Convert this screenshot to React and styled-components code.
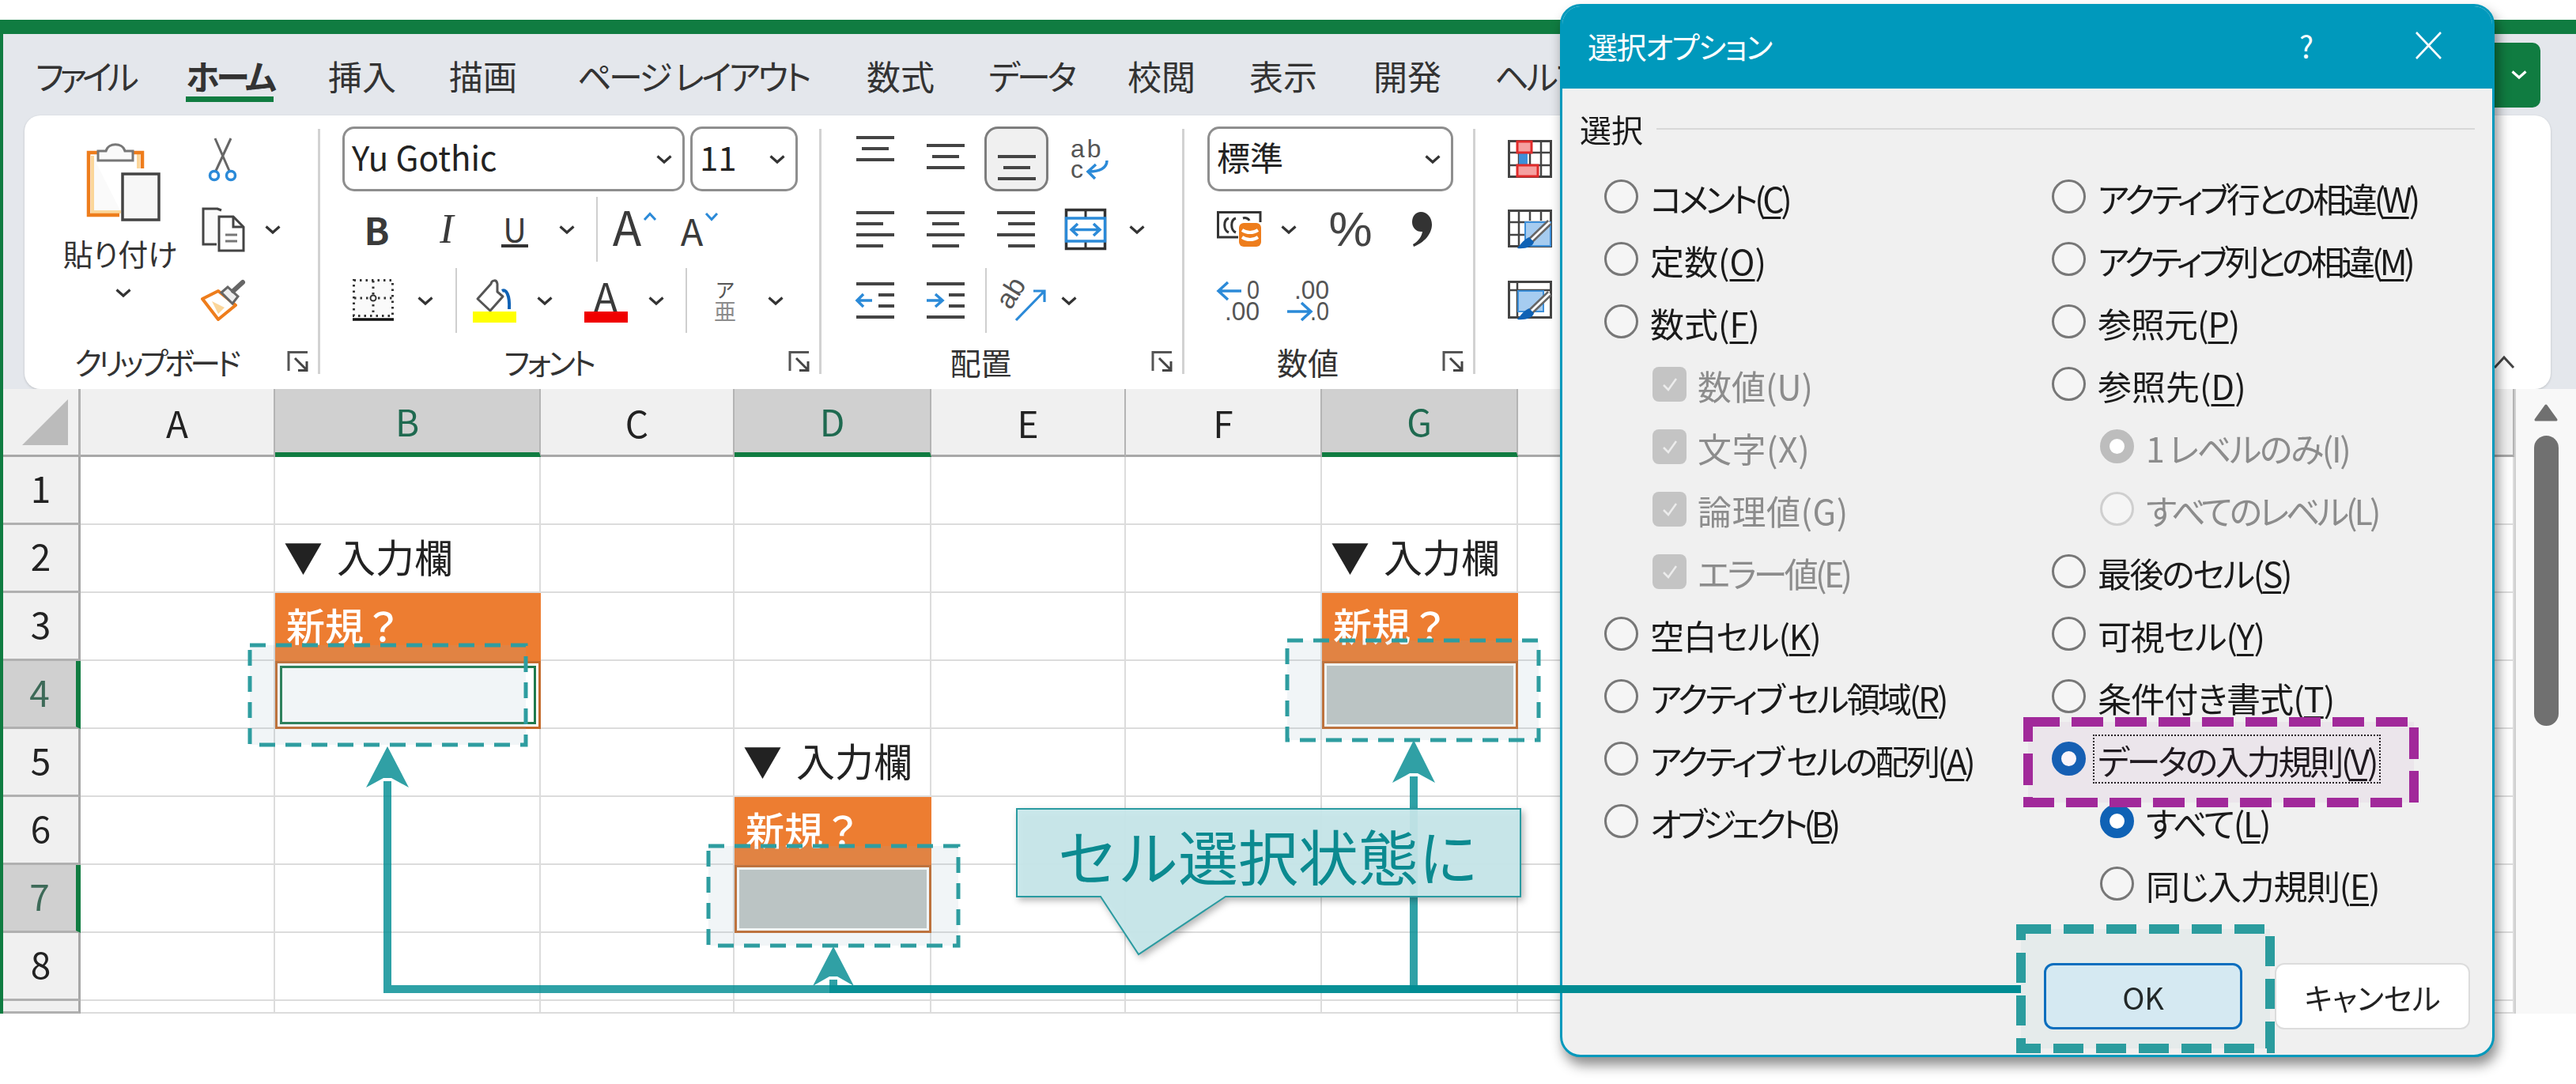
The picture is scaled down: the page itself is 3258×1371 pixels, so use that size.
import React from 'react';
import styled, { createGlobalStyle, css } from 'styled-components';

const JP = `"Noto Sans CJK JP", "Noto Sans", sans-serif`;
const BLUE = '#2b8ad8';
const INK = '#444';

const GlobalStyle = createGlobalStyle`
  html, body {
    margin: 0;
    background: #fff;
    font-family: ${JP};
    font-feature-settings: "palt";
  }
  * {
    box-sizing: border-box;
  }
  svg {
    overflow: visible;
  }
`;

const Page = styled.div`
  position: relative;
  width: 3258px;
  height: 1371px;
  padding-top: 25px;
  overflow: hidden;
  filter: blur(0.7px);
`;

const ExcelWindow = styled.div`
  display: flex;
  flex-direction: column;
  height: 1257px;
  border-top: 18px solid #107c41;
  border-left: 4px solid #107c41;
`;

const Chrome = styled.div`
  height: 449px;
  background: #e4e7ec;
`;

const TabBar = styled.div`
  display: flex;
  align-items: center;
  height: 103px;
  padding: 0 45px 0 41px;
`;

const Tab = styled.div`
  flex: none;
  width: ${(p) => p.$w}px;
  font-size: 43px;
  line-height: 62px;
  color: #333;
  white-space: pre;
  letter-spacing: ${(p) => p.$ls || 0}px;
`;

const ActiveTabText = styled.span`
  display: inline-block;
  font-weight: 700;
  line-height: 54px;
  margin-bottom: -4px;
  border-bottom: 7px solid #107c41;
`;

const AccountButton = styled.div`
  display: flex;
  align-items: center;
  justify-content: flex-end;
  flex: none;
  width: 120px;
  height: 82px;
  margin-left: auto;
  padding-right: 16px;
  background: #107c41;
  border-radius: 10px;
`;

const Ribbon = styled.div`
  display: flex;
  height: 346px;
  margin: 0 32px 0 27px;
  background: #fff;
  border-radius: 20px;
  box-shadow: 0 1px 3px rgba(0, 0, 0, 0.18);
`;

const Group = styled.div`
  display: flex;
  flex-direction: column;
  flex: none;
  width: ${(p) => p.$w}px;
  padding: 14px 0 0 ${(p) => p.$pl || 0}px;
`;

const GroupSep = styled.div`
  flex: none;
  width: 3px;
  height: 310px;
  margin-top: 17px;
  background: #d2d2d2;
`;

const ToolRows = styled.div`
  display: grid;
  grid-template-rows: 82px 82px 84px;
  row-gap: 7px;
  height: 262px;
`;

const ToolRow = styled.div`
  display: flex;
  align-items: center;
`;

const Slot = styled.div`
  display: flex;
  align-items: center;
  justify-content: center;
  flex: none;
  width: ${(p) => p.$w}px;
  margin-left: ${(p) => p.$ml || 0}px;
  color: #3a3a3a;
`;

const RowSep = styled.div`
  flex: none;
  width: 2px;
  height: 82px;
  margin-left: ${(p) => p.$ml || 0}px;
  background: #cfcfcf;
`;

const Combo = styled.div`
  display: flex;
  align-items: center;
  justify-content: space-between;
  flex: none;
  width: ${(p) => p.$w}px;
  height: 82px;
  margin-left: ${(p) => p.$ml || 0}px;
  padding: 0 12px 6px 9px;
  border: 3px solid #8e8e8e;
  border-radius: 15px;
  font-size: 42px;
  line-height: 60px;
  color: #222;
  svg {
    margin-top: 7px;
  }
`;

const PressedButton = styled.div`
  display: flex;
  align-items: center;
  justify-content: center;
  flex: none;
  width: 81px;
  height: 82px;
  margin-left: 4px;
  background: #f0f0f0;
  border: 3px solid #7d7d7d;
  border-radius: 17px;
`;

const LabelRow = styled.div`
  display: flex;
  align-items: center;
  height: 40px;
  margin: 15px 11px 0 ${(p) => -(p.$pl || 0)}px;
`;

const GroupLabel = styled.div`
  flex: 1;
  padding-right: ${(p) => p.$pr || 0}px;
  font-size: 39px;
  line-height: 40px;
  color: #333;
  text-align: center;
  white-space: nowrap;
  letter-spacing: ${(p) => p.$ls || 0}px;
`;

const ClipBody = styled.div`
  display: flex;
  height: 262px;
`;

const PasteColumn = styled.div`
  display: flex;
  flex-direction: column;
  align-items: center;
  flex: none;
  width: 190px;
  margin-left: 30px;
  padding-top: 17px;
`;

const PasteLabel = styled.div`
  margin-top: 20px;
  margin-left: -8px;
  font-size: 38px;
  line-height: 40px;
  color: #333;
  white-space: nowrap;
`;

const PasteChevron = styled.div`
  display: flex;
  margin-top: 24px;
`;

const ClipTools = styled(ToolRows)`
  flex: 1;
`;

const BoldMark = styled.span`
  font-size: 47px;
  font-weight: 700;
  line-height: 1.2;
`;

const ItalicMark = styled.span`
  font-family: "Liberation Serif", serif;
  font-size: 52px;
  font-style: italic;
  line-height: 1.2;
`;

const UnderMark = styled.span`
  font-size: 41px;
  line-height: 42px;
  border-bottom: 4px solid #333;
  padding: 0 2px;
`;

const GrowMark = styled.span`
  font-size: ${(p) => p.$size}px;
  line-height: 1;
  margin-bottom: ${(p) => p.$mb || 0}px;
`;

const CaretWrap = styled.span`
  display: flex;
  margin: 0 0 32px 2px;
`;

const TintTool = styled.div`
  display: flex;
  flex-direction: column;
  align-items: center;
`;

const TintGlyph = styled.div`
  display: flex;
  align-items: flex-end;
  justify-content: center;
  height: 41px;
  font-size: 50px;
  line-height: 41px;
  color: #3a3a3a;
`;

const ColorBar = styled.div`
  width: 55px;
  height: 14px;
  background: ${(p) => p.$color};
`;

const Percent = styled.span`
  font-family: "Liberation Sans", sans-serif;
  font-size: 62px;
  line-height: 1;
  color: #444;
`;

const CollapseWrap = styled.div`
  display: flex;
  align-self: flex-end;
  margin: 0 44px 24px auto;
`;

const Sheet = styled.div`
  display: flex;
  flex: 1;
`;

const SheetGrid = styled.div`
  display: grid;
  flex: none;
  grid-template-columns: 98px 246px 336px 245px 249px 246px 248px 248px 1260px;
  grid-template-rows: 86px repeat(8, 86px) 16px;
  width: 3176px;
  overflow: hidden;
`;

const Corner = styled.div`
  display: flex;
  align-items: flex-end;
  justify-content: flex-end;
  padding: 0 13px 12px 0;
  background: #f0f0f0;
  border-right: 3px solid #b0b0b0;
  border-bottom: 3px solid #a8a8a8;
`;

const ColHead = styled.div`
  display: flex;
  align-items: center;
  justify-content: center;
  font-size: 46px;
  line-height: 1;
  color: ${(p) => (p.$sel ? '#1f6a50' : '#222')};
  background: ${(p) => (p.$sel ? '#d0d0d0' : '#f0f0f0')};
  border-right: 2px solid #b4b4b4;
  border-bottom: ${(p) => (p.$sel ? '6px solid #107c41' : '3px solid #a8a8a8')};
`;

const RowHead = styled.div`
  display: flex;
  align-items: center;
  justify-content: center;
  padding-bottom: 7px;
  font-size: 46px;
  line-height: 1;
  color: ${(p) => (p.$sel ? '#3d6a58' : '#222')};
  background: ${(p) => (p.$sel ? '#d0d0d0' : '#f0f0f0')};
  border-right: ${(p) => (p.$sel ? '6px solid #107c41' : '3px solid #a8a8a8')};
  border-bottom: 3px solid #b0b0b0;
`;

const Cell = styled.div`
  display: flex;
  align-items: center;
  white-space: nowrap;
  border-right: 2.5px solid #dcdcdc;
  border-bottom: 2.5px solid #dcdcdc;
  ${(p) =>
    p.$kind === 'title' &&
    css`
      padding: 0 0 8px 11px;
      font-size: 49px;
      word-spacing: 7px;
      font-feature-settings: normal;
      color: #222;
    `}
  ${(p) =>
    p.$kind === 'head' &&
    css`
      padding: 0 0 6px 14px;
      font-size: 49px;
      font-weight: 500;
      font-feature-settings: normal;
      color: #fff;
      background: #ed7d31;
      border-color: #ed7d31;
    `}
  ${(p) =>
    p.$kind === 'input' &&
    css`
      padding: 3px;
      background: #fff;
      border: 3px solid #c46a2b;
    `}
`;

const InputFill = styled.div`
  width: 100%;
  height: 100%;
  background: ${(p) => (p.$active ? '#fff' : '#c1c7c5')};
  border: ${(p) => (p.$active ? '3px solid #1f7a4d' : 'none')};
`;

const ScrollBar = styled.div`
  display: flex;
  flex-direction: column;
  align-items: center;
  flex: 1;
  padding-top: 19px;
  background: #f8f8f8;
  border-left: 2px solid #cfcfcf;
`;

const ScrollThumb = styled.div`
  width: 31px;
  height: 367px;
  margin-top: 18px;
  background: #707070;
  border-radius: 16px;
`;

const Dialog = styled.div`
  position: absolute;
  left: 1973px;
  top: 5px;
  display: flex;
  flex-direction: column;
  width: 1182px;
  height: 1332px;
  overflow: hidden;
  background: #f0f0f0;
  border: 3px solid #0099bc;
  border-radius: 26px;
  box-shadow: 4px 10px 16px rgba(0, 0, 0, 0.45);
`;

const TitleBar = styled.div`
  display: flex;
  align-items: center;
  flex: none;
  height: 104px;
  padding: 0 64px 6px 32px;
  color: #fff;
  background: #0099bc;
`;

const DialogTitle = styled.div`
  font-size: 38px;
  letter-spacing: -1.5px;
  white-space: nowrap;
`;

const HelpMark = styled.div`
  width: 40px;
  margin: 0 118px 0 auto;
  font-size: 38px;
  text-align: center;
`;

const Legend = styled.div`
  display: flex;
  align-items: center;
  gap: 17px;
  height: 50px;
  margin: 26px 22px 0 22px;
  font-size: 40px;
  color: #1a1a1a;
`;

const LegendRule = styled.div`
  flex: 1;
  height: 2px;
  background: #d8d8d8;
`;

const OptionGrid = styled.div`
  display: grid;
  grid-template-columns: 566px 1fr;
  margin-top: 21px;
  padding-left: 53px;
`;

const OptionColumn = styled.div`
  display: flex;
  flex-direction: column;
`;

const Option = styled.div`
  display: flex;
  align-items: center;
  gap: 15px;
  height: 79px;
  padding-left: ${(p) => (p.$indent ? 61 : 0)}px;
`;

const Radio = styled.span`
  display: flex;
  flex: none;
  width: 43px;
  height: 43px;
  border-radius: 50%;
  background: #f5f5f5;
  border: 3px solid #777;
  ${(p) =>
    p.$muted &&
    css`
      border-color: #cfcfcf;
    `}
  ${(p) =>
    p.$on &&
    css`
      background: #fff;
      border: 12px solid ${p.$muted ? '#bdbdbd' : '#0f62b5'};
    `}
`;

const CheckBox = styled.span`
  display: flex;
  align-items: center;
  justify-content: center;
  flex: none;
  width: 43px;
  height: 44px;
  margin-right: -1px;
  background: #c4c4c4;
  border-radius: 8px;
`;

const OptionLabel = styled.span`
  padding-top: 3px;
  font-size: 43px;
  line-height: 60px;
  white-space: nowrap;
  letter-spacing: ${(p) => p.$ls || 0}px;
  color: ${(p) => (p.$muted ? '#8c8c8c' : '#1a1a1a')};
  ${(p) =>
    p.$focus &&
    css`
      margin-left: -6px;
      padding: 2px 6px 0;
      outline: 2.5px dotted #222;
      outline-offset: -2px;
    `}
  u {
    text-underline-offset: 5px;
    text-decoration-thickness: 3px;
  }
`;

const Footer = styled.div`
  display: flex;
  justify-content: flex-end;
  gap: 41px;
  margin-top: auto;
  padding: 0 28px 32px 0;
`;

const DialogButton = styled.div`
  display: flex;
  align-items: center;
  justify-content: center;
  width: ${(p) => (p.$primary ? 251 : 247)}px;
  height: 84px;
  font-size: 38px;
  color: #222;
  background: ${(p) => (p.$primary ? '#dfeef7' : '#fff')};
  border: ${(p) => (p.$primary ? '3px solid #0a6cc0' : '2px solid #dcdcdc')};
  border-radius: 12px;
`;

const AnnotationLayer = styled.svg`
  position: absolute;
  left: 0;
  top: 0;
  pointer-events: none;
`;

const Callout = styled.div`
  position: absolute;
  left: 1285px;
  top: 1022px;
  width: 640px;
  height: 190px;
  filter: drop-shadow(3px 4px 4px rgba(0, 0, 0, 0.3));
`;

const CalloutShape = styled.svg`
  position: absolute;
  left: 0;
  top: 0;
`;

const CalloutText = styled.div`
  position: relative;
  width: 638px;
  height: 112px;
  padding-top: 3px;
  font-size: 76px;
  line-height: 112px;
  font-feature-settings: normal;
  color: #0b8a90;
  text-align: center;
  white-space: nowrap;
`;

const Chevron = ({ color = '#333' }) => (
  <svg width="22" height="13" viewBox="0 0 22 13">
    <path d="M2.5 2.5 L11 10 L19.5 2.5" fill="none" stroke={color} strokeWidth="3.2" />
  </svg>
);

const Caret = ({ down }) => (
  <svg width="18" height="12" viewBox="0 0 18 12">
    <path d={down ? 'M2 2 L9 9.5 L16 2' : 'M2 10 L9 2.5 L16 10'} fill="none" stroke={BLUE} strokeWidth="3" />
  </svg>
);

const Launcher = () => (
  <svg width="28" height="28" viewBox="0 0 28 28">
    <path d="M2 26 V2.5 H26" fill="none" stroke="#555" strokeWidth="3" />
    <path d="M10 10 L25 25 M25 14 V25.5 H14" fill="none" stroke="#444" strokeWidth="3" />
  </svg>
);

const PasteIcon = () => (
  <svg width="94" height="103" viewBox="0 0 94 103">
    <path d="M8 20 V91 H44" fill="#fafafa" stroke="#fbd69a" strokeWidth="4" />
    <path d="M66 18 V36" fill="none" stroke="#fbd69a" strokeWidth="4" />
    <path d="M20 16 H3 V95 H42" fill="none" stroke="#ee7d1c" strokeWidth="4.5" />
    <path d="M54 16 H71 V36" fill="none" stroke="#ee7d1c" strokeWidth="4.5" />
    <path d="M15 14 H25 C28 3 46 3 49 14 H59 V26 H15 Z" fill="#fafafa" stroke="#777" strokeWidth="3" />
    <rect x="46" y="43" width="46" height="58" fill="#f7f7f7" stroke="#444" strokeWidth="3.5" />
  </svg>
);

const ScissorsIcon = () => (
  <svg width="44" height="58" viewBox="0 0 44 58">
    <path d="M12 3 L30 44 M32 3 L13 44" fill="none" stroke="#666" strokeWidth="3" />
    <circle cx="11" cy="50" r="5.5" fill="#fff" stroke={BLUE} strokeWidth="3.5" />
    <circle cx="32" cy="50" r="5.5" fill="#fff" stroke={BLUE} strokeWidth="3.5" />
  </svg>
);

const CopyIcon = () => (
  <svg width="57" height="57" viewBox="0 0 57 57">
    <path d="M26 4 L21 2 H3 V47 H20" fill="#fafafa" stroke="#444" strokeWidth="3" />
    <path d="M23 12 H41 L54 25 V55 H23 Z" fill="#fff" stroke="#444" strokeWidth="3" />
    <path d="M41 12 V25 H54" fill="none" stroke="#444" strokeWidth="3" />
    <path d="M31 35 H46 M31 43 H46" stroke="#777" strokeWidth="3" />
  </svg>
);

const BrushIcon = () => (
  <svg width="57" height="54" viewBox="0 0 57 54">
    <path d="M2 25 L22 15 L44 33 L22 51 Z" fill="#fff" stroke="#ee7d1c" strokeWidth="4" strokeLinejoin="round" />
    <path d="M14 28 L30 36 L22 44 Z" fill="#fbd69a" />
    <path d="M26 17 L34 10 L47 22 L40 31 Z" fill="#eee" stroke="#666" strokeWidth="3" />
    <path d="M41 15 L53 4" stroke="#666" strokeWidth="6" strokeLinecap="round" />
  </svg>
);

const BorderIcon = () => (
  <svg width="52" height="54" viewBox="0 0 52 54">
    <rect x="1.5" y="1.5" width="49" height="45" fill="#fafafa" stroke="#333" strokeWidth="3" strokeDasharray="2.5 5" />
    <path d="M26 2 V46 M2 24 H50" stroke="#333" strokeWidth="3" strokeDasharray="2.5 5" />
    <circle cx="26" cy="24" r="3.5" fill="#fff" stroke="#333" strokeWidth="2" />
    <path d="M0 51 H52" stroke="#111" strokeWidth="3.5" />
  </svg>
);

const BucketIcon = () => (
  <svg width="46" height="41" viewBox="0 0 46 41">
    <path d="M2 25 L19 6 C20 1 26 0 27 6 L27 16 L34 22 L18 40 Z" fill="#fff" stroke="#555" strokeWidth="3" strokeLinejoin="round" />
    <path d="M33 15 C38 12 43 20 42 38" fill="none" stroke="#0f62b5" strokeWidth="4" />
  </svg>
);

const PhoneticIcon = () => (
  <svg width="36" height="57" viewBox="0 0 36 57">
    <text x="18" y="24" textAnchor="middle" fontSize="25" fill="#555" fontFamily={JP}>ア</text>
    <text x="18" y="53" textAnchor="middle" fontSize="28" fill="#8c8c8c" fontFamily={JP}>亜</text>
  </svg>
);

const Lines = ({ width = 48, height, rows, color = INK }) => (
  <svg width={width} height={height} viewBox={`0 0 ${width} ${height}`}>
    {rows.map(([x0, x1, y]) => (
      <path key={`${x0}-${y}`} d={`M${x0} ${y} H${x1}`} stroke={color} strokeWidth="4" />
    ))}
  </svg>
);

const AlignV = ({ top }) => (
  <Lines height={58} rows={[[0, 48, top], [7, 41, top + 14], [0, 48, top + 28]]} />
);

const AlignH = ({ variant }) => {
  const short = { left: [0, 34], center: [7, 41], right: [14, 48] }[variant];
  return <Lines height={46} rows={[[0, 48, 2], [...short, 16], [0, 48, 30], [...short, 44]]} />;
};

const WrapIcon = () => (
  <svg width="50" height="56" viewBox="0 0 50 56">
    <text x="0" y="26" fontSize="32" letterSpacing="3" fill="#555" fontFamily="Liberation Sans, sans-serif">ab</text>
    <text x="0" y="52" fontSize="32" fill="#555" fontFamily="Liberation Sans, sans-serif">c</text>
    <path d="M46 30 C46 40 36 44 24 44 M32 35 L22 44 L31 53" fill="none" stroke={BLUE} strokeWidth="3.5" />
  </svg>
);

const MergeIcon = () => (
  <svg width="52" height="52" viewBox="0 0 52 52">
    <rect x="1.5" y="1.5" width="49" height="49" fill="#fff" stroke="#333" strokeWidth="3.5" />
    <path d="M26 2 V50" stroke="#333" strokeWidth="3" />
    <rect x="1.5" y="12" width="49" height="29" fill="#fff" stroke={BLUE} strokeWidth="3.5" />
    <path d="M9 26.5 H43 M16 19 L8 26.5 L16 34 M36 19 L44 26.5 L36 34" fill="none" stroke={BLUE} strokeWidth="3.5" />
  </svg>
);

const IndentIcon = ({ right }) => (
  <svg width="48" height="46" viewBox="0 0 48 46">
    <path d="M0 2 H48 M28 16 H48 M28 30 H48 M0 44 H48" stroke={INK} strokeWidth="4" />
    <path
      d={right ? 'M0 23 H18 M11 15 L20 23 L11 31' : 'M2 23 H20 M9 15 L1 23 L9 31'}
      fill="none"
      stroke={BLUE}
      strokeWidth="3.5"
    />
  </svg>
);

const OrientIcon = () => (
  <svg width="56" height="54" viewBox="0 0 56 54">
    <text x="0" y="0" fontSize="35" fill="#555" fontFamily="Liberation Sans, sans-serif" transform="translate(11 40) rotate(-58)">ab</text>
    <path d="M18 52 L54 15 M40 15 H54 V29" fill="none" stroke={BLUE} strokeWidth="3.2" />
  </svg>
);

const CurrencyIcon = () => (
  <svg width="57" height="46" viewBox="0 0 57 46">
    <path d="M27 33 H1.5 V1.5 H55 V14" fill="none" stroke="#333" strokeWidth="3" />
    <path d="M15 9 C8 11 8 24 15 27 M24 9 C17 11 17 24 24 27 M33 9 C36 8 40 9 41 12" fill="none" stroke="#333" strokeWidth="3" />
    <rect x="28" y="15" width="28" height="30" rx="6" fill="#ee7d1c" />
    <path d="M32 24 C38 28 46 28 52 24 M32 33 C38 37 46 37 52 33" fill="none" stroke="#fff" strokeWidth="4" />
  </svg>
);

const CommaIcon = () => (
  <svg width="26" height="44" viewBox="0 0 26 44">
    <path d="M11 0 C19 0 25 7 25 16 C25 28 15 39 2 44 L1 41 C8 37 12 31 13 25 C6 26 0 20 0 13 C0 5 5 0 11 0 Z" fill="#333" />
  </svg>
);

const DecimalIcon = ({ less }) => (
  <svg width="56" height="54" viewBox="0 0 56 54">
    {less ? (
      <>
        <text x="38" y="25" fontSize="33" fill="#555" fontFamily="Liberation Sans, sans-serif" textLength="16" lengthAdjust="spacingAndGlyphs">0</text>
        <text x="10" y="52" fontSize="33" fill="#555" fontFamily="Liberation Sans, sans-serif" textLength="44" lengthAdjust="spacingAndGlyphs">.00</text>
        <path d="M2 15 H31 M14 4 L2 15 L14 26" fill="none" stroke={BLUE} strokeWidth="3.5" />
      </>
    ) : (
      <>
        <text x="10" y="25" fontSize="33" fill="#555" fontFamily="Liberation Sans, sans-serif" textLength="44" lengthAdjust="spacingAndGlyphs">.00</text>
        <text x="30" y="52" fontSize="33" fill="#555" fontFamily="Liberation Sans, sans-serif" textLength="24" lengthAdjust="spacingAndGlyphs">.0</text>
        <path d="M1 41 H30 M19 30 L31 41 L19 52" fill="none" stroke={BLUE} strokeWidth="3.5" />
      </>
    )}
  </svg>
);

const TableGrid = ({ rows }) => (
  <>
    <rect x="1.5" y="1.5" width="53" height="45" fill="#fff" stroke="#444" strokeWidth="3" />
    {rows.map((d) => (
      <path key={d} d={d} stroke="#444" strokeWidth="2.5" />
    ))}
  </>
);

const CondFormatIcon = () => (
  <svg width="56" height="48" viewBox="0 0 56 48">
    <TableGrid rows={['M14 2 V46', 'M28 2 V46', 'M42 2 V46', 'M2 16 H54', 'M2 32 H54']} />
    <rect x="14" y="16" width="11" height="16" fill="#3d8fd9" />
    <rect x="12" y="2" width="18" height="14" fill="#f5a0a0" stroke="#e02b2b" strokeWidth="3" />
    <rect x="12" y="32" width="26" height="14" fill="#f5a0a0" stroke="#e02b2b" strokeWidth="3" />
  </svg>
);

const TableStyleIcon = ({ open }) => (
  <svg width="56" height="50" viewBox="0 0 56 50">
    <TableGrid rows={open ? ['M12 2 V46', 'M2 12 H54'] : ['M14 2 V46', 'M28 2 V14', 'M42 2 V14', 'M2 16 H54', 'M2 32 H24']} />
    <rect x={open ? 13 : 22} y={open ? 13 : 16} width="32" height={open ? 26 : 30} fill="#a6ccf0" stroke="#3d8fd9" strokeWidth="2" />
    <path d="M53 16 L27 41" stroke="#666" strokeWidth="8" />
    <path d="M53 16 L27 41" stroke="#fff" strokeWidth="3" />
    <path d="M27 35 C20 38 16 44 12 49 C22 50 32 47 33 41 Z" fill="#0f62b5" />
  </svg>
);

const CheckMark = () => (
  <svg width="24" height="24" viewBox="0 0 24 24">
    <path d="M4 13 L10 19 L20 5" fill="none" stroke="#ececec" strokeWidth="2.5" />
  </svg>
);

const CloseIcon = () => (
  <svg width="33" height="35" viewBox="0 0 33 35">
    <path d="M1 1 L32 34 M32 1 L1 34" stroke="#fff" strokeWidth="2.6" />
  </svg>
);

const tabs = [
  { text: 'ファイル', w: 190, ls: -6 },
  { text: 'ホーム', w: 180, ls: -4, active: true },
  { text: '挿入', w: 153 },
  { text: '描画', w: 162 },
  { text: 'ページ レイアウト', w: 366, ls: -3.5 },
  { text: '数式', w: 154 },
  { text: 'データ', w: 176, ls: -4 },
  { text: '校閲', w: 154 },
  { text: '表示', w: 157 },
  { text: '開発', w: 153 },
  { text: 'ヘルプ', w: 120, ls: -3 },
];

const columns = ['A', 'B', 'C', 'D', 'E', 'F', 'G', 'H'];
const selectedColumns = ['B', 'D', 'G'];
const selectedRows = [4, 7];

const sheetCells = {
  B2: { kind: 'title', text: '▼ 入力欄' },
  B3: { kind: 'head', text: '新規？' },
  B4: { kind: 'input', active: true },
  D5: { kind: 'title', text: '▼ 入力欄' },
  D6: { kind: 'head', text: '新規？' },
  D7: { kind: 'input' },
  G2: { kind: 'title', text: '▼ 入力欄' },
  G3: { kind: 'head', text: '新規？' },
  G4: { kind: 'input' },
};

const leftOptions = [
  { label: 'コメント', accel: 'C', ls: -4.4 },
  { label: '定数', accel: 'O' },
  { label: '数式', accel: 'F' },
  { label: '数値', accel: 'U', check: true },
  { label: '文字', accel: 'X', check: true, ls: 0.5 },
  { label: '論理値', accel: 'G', check: true, ls: 0.5 },
  { label: 'エラー値', accel: 'E', check: true, ls: -3.7 },
  { label: '空白セル', accel: 'K', ls: -1.2 },
  { label: 'アクティブ セル領域', accel: 'R', ls: -3.3 },
  { label: 'アクティブ セルの配列', accel: 'A', ls: -3.5 },
  { label: 'オブジェクト', accel: 'B', ls: -5.3 },
];

const rightOptions = [
  { label: 'アクティブ行との相違', accel: 'W', ls: -4.2 },
  { label: 'アクティブ列との相違', accel: 'M', ls: -4.5 },
  { label: '参照元', accel: 'P', ls: -1 },
  { label: '参照先', accel: 'D' },
  { label: '1 レベルのみ', accel: 'I', ls: -2.3, indent: true, muted: true, on: true },
  { label: 'すべてのレベル', accel: 'L', ls: -4, indent: true, muted: true },
  { label: '最後のセル', accel: 'S', ls: -2.4 },
  { label: '可視セル', accel: 'Y', ls: -1.2 },
  { label: '条件付き書式', accel: 'T', ls: -0.9 },
  { label: 'データの入力規則', accel: 'V', ls: -3.2, on: true, focus: true },
  { label: 'すべて', accel: 'L', ls: -2.3, indent: true, on: true },
  { label: '同じ入力規則', accel: 'E', ls: -1.3, indent: true },
];

const OptionItem = ({ label, accel, ls, check, indent, muted, on, focus }) => {
  const dim = muted || check;
  return (
    <Option $indent={indent || check}>
      {check ? (
        <CheckBox>
          <CheckMark />
        </CheckBox>
      ) : (
        <Radio $on={on} $muted={muted} />
      )}
      <OptionLabel $muted={dim} $focus={focus} $ls={ls}>
        {label}({dim ? accel : <u>{accel}</u>})
      </OptionLabel>
    </Option>
  );
};

const ClipboardGroup = () => (
  <Group $w={371}>
    <ClipBody>
      <PasteColumn>
        <PasteIcon />
        <PasteLabel>貼り付け</PasteLabel>
        <PasteChevron>
          <Chevron />
        </PasteChevron>
      </PasteColumn>
      <ClipTools>
        <ToolRow>
          <Slot $w={62}>
            <ScissorsIcon />
          </Slot>
        </ToolRow>
        <ToolRow>
          <Slot $w={62}>
            <CopyIcon />
          </Slot>
          <Slot $w={64}>
            <Chevron />
          </Slot>
        </ToolRow>
        <ToolRow>
          <Slot $w={62}>
            <BrushIcon />
          </Slot>
        </ToolRow>
      </ClipTools>
    </ClipBody>
    <LabelRow>
      <GroupLabel $ls={-4.9}>クリップボード</GroupLabel>
      <Launcher />
    </LabelRow>
  </Group>
);

const FontGroup = () => (
  <Group $w={631} $pl={28}>
    <ToolRows>
      <ToolRow>
        <Combo $w={433}>
          Yu Gothic
          <Chevron />
        </Combo>
        <Combo $w={136} $ml={7}>
          11
          <Chevron />
        </Combo>
      </ToolRow>
      <ToolRow>
        <Slot $w={87}>
          <BoldMark>B</BoldMark>
        </Slot>
        <Slot $w={90}>
          <ItalicMark>I</ItalicMark>
        </Slot>
        <Slot $w={82}>
          <UnderMark>U</UnderMark>
        </Slot>
        <Slot $w={50}>
          <Chevron />
        </Slot>
        <RowSep $ml={12} />
        <Slot $w={82} $ml={6}>
          <GrowMark $size={60} $mb={10}>A</GrowMark>
          <CaretWrap>
            <Caret />
          </CaretWrap>
        </Slot>
        <Slot $w={82}>
          <GrowMark $size={47}>A</GrowMark>
          <CaretWrap>
            <Caret down />
          </CaretWrap>
        </Slot>
      </ToolRow>
      <ToolRow>
        <Slot $w={77}>
          <BorderIcon />
        </Slot>
        <Slot $w={55}>
          <Chevron />
        </Slot>
        <RowSep $ml={11} />
        <Slot $w={94}>
          <TintTool>
            <TintGlyph>
              <BucketIcon />
            </TintGlyph>
            <ColorBar $color="#ffff00" />
          </TintTool>
        </Slot>
        <Slot $w={34}>
          <Chevron />
        </Slot>
        <Slot $w={92} $ml={14}>
          <TintTool>
            <TintGlyph>A</TintGlyph>
            <ColorBar $color="#f00000" />
          </TintTool>
        </Slot>
        <Slot $w={36}>
          <Chevron />
        </Slot>
        <RowSep $ml={19} />
        <Slot $w={96}>
          <PhoneticIcon />
        </Slot>
        <Slot $w={32}>
          <Chevron />
        </Slot>
      </ToolRow>
    </ToolRows>
    <LabelRow $pl={28}>
      <GroupLabel $pr={14} $ls={-3.7}>フォント</GroupLabel>
      <Launcher />
    </LabelRow>
  </Group>
);

const AlignmentGroup = () => (
  <Group $w={456} $pl={24}>
    <ToolRows>
      <ToolRow>
        <Slot $w={88}>
          <AlignV top={2} />
        </Slot>
        <Slot $w={90}>
          <AlignV top={12} />
        </Slot>
        <PressedButton>
          <AlignV top={26} />
        </PressedButton>
        <Slot $w={106}>
          <WrapIcon />
        </Slot>
      </ToolRow>
      <ToolRow>
        <Slot $w={88}>
          <AlignH variant="left" />
        </Slot>
        <Slot $w={90}>
          <AlignH variant="center" />
        </Slot>
        <Slot $w={88}>
          <AlignH variant="right" />
        </Slot>
        <Slot $w={88}>
          <MergeIcon />
        </Slot>
        <Slot $w={42}>
          <Chevron />
        </Slot>
      </ToolRow>
      <ToolRow>
        <Slot $w={88}>
          <IndentIcon />
        </Slot>
        <Slot $w={90}>
          <IndentIcon right />
        </Slot>
        <RowSep $ml={5} />
        <Slot $w={94}>
          <OrientIcon />
        </Slot>
        <Slot $w={20}>
          <Chevron />
        </Slot>
      </ToolRow>
    </ToolRows>
    <LabelRow $pl={24}>
      <GroupLabel $pr={14}>配置</GroupLabel>
      <Launcher />
    </LabelRow>
  </Group>
);

const NumberGroup = () => (
  <Group $w={365} $pl={29}>
    <ToolRows>
      <ToolRow>
        <Combo $w={311}>
          標準
          <Chevron />
        </Combo>
      </ToolRow>
      <ToolRow>
        <Slot $w={80}>
          <CurrencyIcon />
        </Slot>
        <Slot $w={46}>
          <Chevron />
        </Slot>
        <Slot $w={110}>
          <Percent>%</Percent>
        </Slot>
        <Slot $w={72}>
          <CommaIcon />
        </Slot>
      </ToolRow>
      <ToolRow>
        <Slot $w={80}>
          <DecimalIcon less />
        </Slot>
        <Slot $w={96}>
          <DecimalIcon />
        </Slot>
      </ToolRow>
    </ToolRows>
    <LabelRow $pl={29}>
      <GroupLabel $pr={14}>数値</GroupLabel>
      <Launcher />
    </LabelRow>
  </Group>
);

const StylesGroup = () => (
  <Group $w={120} $pl={41}>
    <ToolRows>
      <ToolRow>
        <CondFormatIcon />
      </ToolRow>
      <ToolRow>
        <TableStyleIcon />
      </ToolRow>
      <ToolRow>
        <TableStyleIcon open />
      </ToolRow>
    </ToolRows>
  </Group>
);

const SheetArea = () => {
  const rows = [1, 2, 3, 4, 5, 6, 7, 8, 9];
  return (
    <Sheet>
      <SheetGrid>
        <Corner>
          <svg width="58" height="58" viewBox="0 0 58 58">
            <path d="M58 0 V58 H0 Z" fill="#bbb" />
          </svg>
        </Corner>
        {columns.map((c) => (
          <ColHead key={c} $sel={selectedColumns.includes(c)}>
            {c === 'H' ? '' : c}
          </ColHead>
        ))}
        {rows.map((r) => (
          <React.Fragment key={r}>
            <RowHead $sel={selectedRows.includes(r)}>{r === 9 ? '' : r}</RowHead>
            {columns.map((c) => {
              const cell = sheetCells[`${c}${r}`];
              return (
                <Cell key={c} $kind={cell && cell.kind}>
                  {cell && cell.text}
                  {cell && cell.kind === 'input' && <InputFill $active={cell.active} />}
                </Cell>
              );
            })}
          </React.Fragment>
        ))}
      </SheetGrid>
      <ScrollBar>
        <svg width="32" height="22" viewBox="0 0 32 22">
          <path d="M16 2 L29 20 H3 Z" fill="#707070" stroke="#707070" strokeWidth="3" strokeLinejoin="round" />
        </svg>
        <ScrollThumb />
      </ScrollBar>
    </Sheet>
  );
};

const SelectDialog = () => (
  <Dialog>
    <TitleBar>
      <DialogTitle>選択オプション</DialogTitle>
      <HelpMark>?</HelpMark>
      <CloseIcon />
    </TitleBar>
    <Legend>
      選択
      <LegendRule />
    </Legend>
    <OptionGrid>
      <OptionColumn>
        {leftOptions.map((o) => (
          <OptionItem key={o.label} {...o} />
        ))}
      </OptionColumn>
      <OptionColumn>
        {rightOptions.map((o) => (
          <OptionItem key={o.label} {...o} />
        ))}
      </OptionColumn>
    </OptionGrid>
    <Footer>
      <DialogButton $primary>OK</DialogButton>
      <DialogButton>キャンセル</DialogButton>
    </Footer>
  </Dialog>
);

const TEAL_LINE = 'rgba(0, 140, 146, 0.82)';
const TEAL_HEAD = '#30a0a5';
const TEAL_DASH = '#2e9da0';

const cellBoxes = [
  { x: 316, y: 816, w: 349, h: 126 },
  { x: 896, y: 1070, w: 316, h: 126 },
  { x: 1628, y: 810, w: 318, h: 126 },
];

const arrows = [
  { x: 490, tip: 944, base: 996, half: 27 },
  { x: 1054, tip: 1197, base: 1247, half: 26 },
  { x: 1788, tip: 936, base: 990, half: 27 },
];

const Annotations = () => (
  <AnnotationLayer width="3258" height="1371" viewBox="0 0 3258 1371">
    {cellBoxes.map((b) => (
      <rect
        key={b.x}
        x={b.x}
        y={b.y}
        width={b.w}
        height={b.h}
        fill="rgba(143, 179, 192, 0.13)"
        stroke={TEAL_DASH}
        strokeWidth="5"
        strokeDasharray="20 13"
      />
    ))}
    {arrows.map((a) => (
      <g key={a.x}>
        <path d={`M2556 1251 H${a.x} V${a.base - 8}`} fill="none" stroke={TEAL_LINE} strokeWidth="10" />
        <path
          d={`M${a.x} ${a.tip} L${a.x + a.half} ${a.base} L${a.x + 5} ${a.base - 12} H${a.x - 5} L${a.x - a.half} ${a.base} Z`}
          fill={TEAL_HEAD}
        />
      </g>
    ))}
    <rect x="2565" y="913" width="488" height="102" fill="rgba(160, 46, 154, 0.05)" stroke="#a1299a" strokeWidth="12" strokeDasharray="40 15" />
    <rect x="2556" y="1175" width="315" height="151" fill="rgba(43, 156, 158, 0.05)" stroke="#2b9c9e" strokeWidth="12" strokeDasharray="38 16" />
  </AnnotationLayer>
);

const App = () => (
  <Page>
    <GlobalStyle />
    <ExcelWindow>
      <Chrome>
        <TabBar>
          {tabs.map((t) => (
            <Tab key={t.text} $w={t.w} $ls={t.ls}>
              {t.active ? <ActiveTabText>{t.text}</ActiveTabText> : t.text}
            </Tab>
          ))}
          <AccountButton>
            <Chevron color="#fff" />
          </AccountButton>
        </TabBar>
        <Ribbon>
          <ClipboardGroup />
          <GroupSep />
          <FontGroup />
          <GroupSep />
          <AlignmentGroup />
          <GroupSep />
          <NumberGroup />
          <GroupSep />
          <StylesGroup />
          <CollapseWrap>
            <svg width="30" height="20" viewBox="0 0 30 20">
              <path d="M3 17 L15 4 L27 17" fill="none" stroke="#444" strokeWidth="3" />
            </svg>
          </CollapseWrap>
        </Ribbon>
      </Chrome>
      <SheetArea />
    </ExcelWindow>
    <SelectDialog />
    <Annotations />
    <Callout>
      <CalloutShape width="640" height="190" viewBox="0 0 640 190">
        <path d="M1 1 H638 V112 H265 L155 185 L107 112 H1 Z" fill="rgba(200, 232, 236, 0.93)" stroke="#2a9ba1" strokeWidth="2" />
      </CalloutShape>
      <CalloutText>セル選択状態に</CalloutText>
    </Callout>
  </Page>
);

export default App;
